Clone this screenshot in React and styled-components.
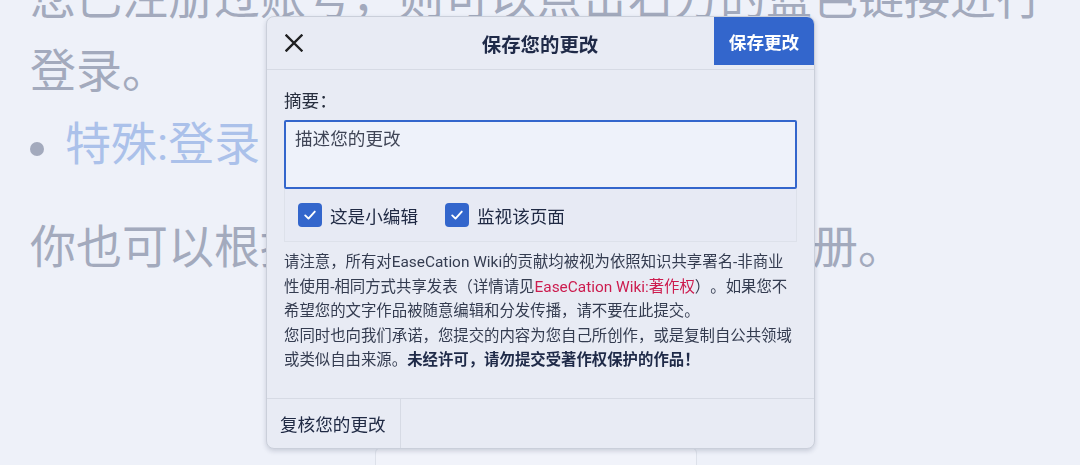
import React from "react";
import styled, { createGlobalStyle } from "styled-components";

const Global = createGlobalStyle`
  html, body { margin: 0; padding: 0; }
  body {
    width: 1080px;
    height: 465px;
    overflow: hidden;
    background: #eef1f9;
    font-family: Roboto, "Noto Sans CJK SC", "Noto Sans", sans-serif;
    text-spacing-trim: space-all;
  }
`;

const Page = styled.main`
  height: 465px;
  overflow: hidden;
  box-sizing: border-box;
  padding-left: 30px;
  font-size: 46px;
  line-height: 73px;
  color: #a3aabd;
`;

const Content = styled.div`
  margin-top: -38px;
`;

const Para = styled.p`
  margin: ${(p) => (p.$gap ? "30px 0 0" : "0")};
`;

const List = styled.ul`
  margin: 0;
  padding: 0;
  list-style: none;
`;

const Item = styled.li`
  display: flex;
  align-items: center;
  gap: 21px;
`;

const Bullet = styled.span`
  width: 14px;
  height: 14px;
  margin-top: 8px;
  border-radius: 50%;
  background: #a3aabd;
  flex: none;
`;

const PageLink = styled.a`
  color: #abc1ea;
  text-decoration: none;
`;

const LoginBox = styled.div`
  margin: 163px 0 0 345px;
  width: 322px;
  height: 60px;
  box-sizing: border-box;
  background: #f1f3fa;
  border: 1px solid #dde1ea;
  border-radius: 6px;
`;

const Dialog = styled.section`
  position: fixed;
  top: 16px;
  left: 266px;
  width: 549px;
  height: 433px;
  box-sizing: border-box;
  display: flex;
  flex-direction: column;
  overflow: hidden;
  background: #e8ebf4;
  border: 1px solid #cacfda;
  border-radius: 8px;
  box-shadow: 0 2px 5px rgba(30, 40, 70, 0.18);
  color: #202a44;
  font-size: 17.6px;
`;

const Header = styled.header`
  flex: none;
  display: grid;
  grid-template-columns: 99px 1fr 100px;
  height: 52px;
  border-bottom: 1px solid #d6dae4;
`;

const CloseButton = styled.button`
  display: flex;
  align-items: center;
  padding: 0 0 0 18px;
  border: 0;
  background: transparent;
  color: #202122;
  cursor: pointer;
`;

const Title = styled.h1`
  margin: 0;
  display: flex;
  align-items: center;
  justify-content: center;
  font-size: 19.4px;
  font-weight: 700;
  color: #1f2a48;
`;

const SaveButton = styled.button`
  height: 48px;
  border: 0;
  padding: 0;
  background: #3366cc;
  color: #ffffff;
  font-family: inherit;
  font-size: 17.6px;
  font-weight: 700;
  cursor: pointer;
`;

const Body = styled.div`
  flex: 1;
  padding: 17px 17px 0;
`;

const Label = styled.label`
  display: block;
  line-height: 28px;
  margin-bottom: 5px;
  color: #262d3d;
`;

const Summary = styled.textarea`
  display: block;
  width: 100%;
  height: 69px;
  box-sizing: border-box;
  margin: 0;
  padding: 4px 9px;
  border: 2px solid #3366cc;
  border-radius: 2px;
  background: #eef2fa;
  font-family: inherit;
  font-size: 17.6px;
  line-height: 1.5;
  color: #202a44;
  resize: none;
  outline: none;
  &::placeholder {
    color: #3f4556;
    opacity: 1;
  }
`;

const Options = styled.div`
  display: flex;
  align-items: center;
  gap: 27px;
  height: 53px;
  box-sizing: border-box;
  padding-left: 13px;
  border: 1px solid #dde1ea;
  border-top: 0;
  background: #e7eaf4;
`;

const Option = styled.label`
  display: flex;
  align-items: center;
  gap: 8px;
  color: #202a44;
`;

const Box = styled.span`
  width: 24px;
  height: 24px;
  border-radius: 4px;
  background: #3366cc;
  display: flex;
  align-items: center;
  justify-content: center;
`;

const Notice = styled.div`
  margin-top: 8px;
  font-size: 15.4px;
  line-height: 24.5px;
  color: #343c50;
`;

const NoticeLine = styled.p`
  margin: 0;
`;

const RedLink = styled.a`
  color: #cc1b4e;
  text-decoration: none;
`;

const Strong = styled.strong`
  color: #1f2a48;
  font-weight: 700;
`;

const Footer = styled.footer`
  flex: none;
  display: flex;
  height: 49px;
  border-top: 1px solid #d6dae4;
`;

const ReviewButton = styled.button`
  padding: 0 14px 0 13px;
  border: 0;
  border-right: 1px solid #d6dae4;
  background: transparent;
  font-family: inherit;
  font-size: 17.6px;
  color: #202a44;
  cursor: pointer;
`;

const Check = () => (
  <Box>
    <svg width="16" height="16" viewBox="0 0 16 16" fill="none">
      <path d="M3.2 8.4 L6.5 11.6 L12.8 4.6" stroke="#fff" strokeWidth="1.9" strokeLinecap="round" strokeLinejoin="round" />
    </svg>
  </Box>
);

export default function App() {
  return (
    <>
      <Global />
      <Page>
        <Content>
          <Para>您已注册过账号，则可以点击右方的蓝色链接进行登录。</Para>
          <List>
            <Item>
              <Bullet />
              <PageLink href="#">特殊:登录</PageLink>
            </Item>
          </List>
          <Para $gap>你也可以根据下方的表单创建账号并注册。</Para>
          <LoginBox />
        </Content>
      </Page>
      <Dialog role="dialog">
        <Header>
          <CloseButton aria-label="关闭">
            <svg width="18" height="18" viewBox="0 0 18 18">
              <path d="M1.5 1.5 L16.5 16.5 M16.5 1.5 L1.5 16.5" stroke="#202122" strokeWidth="2.4" strokeLinecap="square" />
            </svg>
          </CloseButton>
          <Title>保存您的更改</Title>
          <SaveButton>保存更改</SaveButton>
        </Header>
        <Body>
          <Label htmlFor="summary">摘要：</Label>
          <Summary id="summary" placeholder="描述您的更改" />
          <Options>
            <Option>
              <Check />
              这是小编辑
            </Option>
            <Option>
              <Check />
              监视该页面
            </Option>
          </Options>
          <Notice>
            <NoticeLine>
              请注意，所有对EaseCation Wiki的贡献均被视为依照知识共享署名-非商业性使用-相同方式共享发表（详情请见
              <RedLink href="#">EaseCation Wiki:著作权</RedLink>
              ）。如果您不希望您的文字作品被随意编辑和分发传播，请不要在此提交。
            </NoticeLine>
            <NoticeLine>
              您同时也向我们承诺，您提交的内容为您自己所创作，或是复制自公共领域或类似自由来源。
              <Strong>未经许可，请勿提交受著作权保护的作品！</Strong>
            </NoticeLine>
          </Notice>
        </Body>
        <Footer>
          <ReviewButton>复核您的更改</ReviewButton>
        </Footer>
      </Dialog>
    </>
  );
}
